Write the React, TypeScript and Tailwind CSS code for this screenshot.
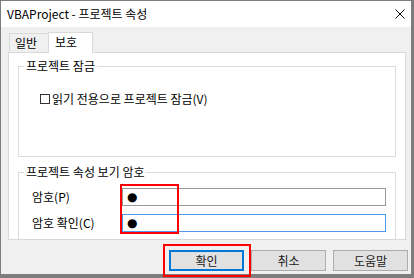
import React from "react";

const font = "font-['Noto_Sans_CJK_KR','Noto_Sans',sans-serif]";

function Button({ label, focused = false }: { label: string; focused?: boolean }) {
  return (
    <button
      type="button"
      className={
        "w-[75px] h-[21px] flex items-center justify-center bg-[#e1e1e1] text-[12px] leading-[16px] text-[#1b1b1b] " +
        (focused ? "border-2 border-[#0078d7]" : "border border-[#adadad]")
      }
    >
      {label}
    </button>
  );
}

function PasswordRow({ label, focused = false }: { label: string; focused?: boolean }) {
  return (
    <div className="flex items-center h-[18px]">
      <span className="w-[90px] text-[12px] leading-[16px] text-black">{label}</span>
      <div
        className={
          "w-[264px] h-[18px] flex items-center pl-[4px] bg-white border " +
          (focused ? "border-[#4d9be6]" : "border-[#9a9a9a]")
        }
      >
        <span className="font-['DejaVu_Sans',sans-serif] text-[12px] leading-[14px] text-black">●</span>
      </div>
    </div>
  );
}

export default function App() {
  return (
    <div
      className={
        "relative w-[414px] h-[278px] flex flex-col bg-[#f0f0f0] border-l border-t border-r-[3px] border-b-[4px] border-[#7d7d7d] " +
        font
      }
    >
      {/* title bar */}
      <div className="h-[26px] bg-white flex items-center justify-between pl-[6px] pr-[6px]">
        <span className="text-[12px] leading-[16px] text-black">VBAProject - 프로젝트 속성</span>
        <svg width="10" height="10" viewBox="0 0 10 10" className="text-[#111]">
          <path d="M0.5 0.5 L9.5 9.5 M9.5 0.5 L0.5 9.5" stroke="currentColor" strokeWidth="1" fill="none" />
        </svg>
      </div>

      {/* tabs */}
      <div className="mt-[5px] ml-[8px] h-[20px] flex items-end">
        <div className="w-[39px] h-[19px] pl-[5px] border-l border-t border-[#d9d9d9] bg-[#f0f0f0] text-[12px] leading-[18px] text-black">
          일반
        </div>
        <div className="relative z-10 -mb-px w-[45px] h-[21px] pl-[6px] border-l border-t border-r border-[#d9d9d9] bg-white text-[12px] leading-[18px] text-black">
          보호
        </div>
      </div>

      {/* tab page */}
      <div className="ml-[7px] w-[398px] h-[188px] bg-white border border-[#d9d9d9] px-[9px] overflow-hidden">
        <fieldset className="mt-[5px] h-[99px] border border-[#dcdcdc]">
          <legend className="ml-[5px] px-[2px] text-[12px] leading-[16px] text-black">프로젝트 잠금</legend>
          <label className="mt-[17px] ml-[21px] flex items-center h-[16px] text-[12px] leading-[16px] text-black">
            <span className="w-[10px] h-[10px] border border-[#333] bg-white mr-[2px]" />
            읽기 전용으로 프로젝트 잠금(V)
          </label>
        </fieldset>

        <fieldset className="mt-[7px] h-[75px] border border-b-0 border-[#dcdcdc]">
          <legend className="ml-[5px] px-[2px] text-[12px] leading-[16px] text-black">프로젝트 속성 보기 암호</legend>
          <div className="mt-[8px] ml-[13px] flex flex-col gap-[8px]">
            <PasswordRow label="암호(P)" />
            <PasswordRow label="암호 확인(C)" focused />
          </div>
        </fieldset>
      </div>

      {/* buttons */}
      <div className="mt-[10px] pr-[3px] flex justify-end gap-[7px]">
        <Button label="확인" focused />
        <Button label="취소" />
        <Button label="도움말" />
      </div>

      {/* red highlight boxes */}
      <div className="absolute left-[119px] top-[183px] w-[59px] h-[50px] border-2 border-[#ff0000]" />
      <div className="absolute left-[162px] top-[243px] w-[88px] h-[33px] border-2 border-[#ff0000]" />
    </div>
  );
}
